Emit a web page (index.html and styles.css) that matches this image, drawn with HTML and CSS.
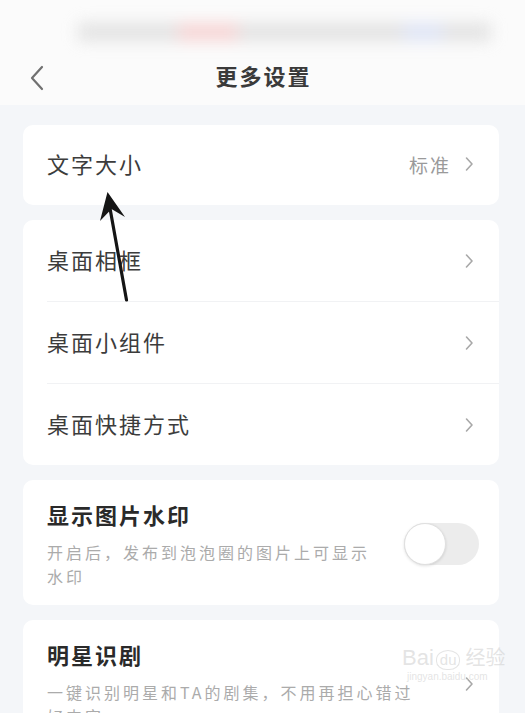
FILE: index.html
```html
<!DOCTYPE html>
<html lang="zh-CN">
<head>
<meta charset="utf-8">
<title>更多设置</title>
<link rel="stylesheet" href="styles.css">
</head>
<body>
<div class="page">
  <header class="topbar">
    <div class="status">
      <div class="blurbar">
        <span class="blob b-gray w90"></span>
        <span class="blob b-pink w60"></span>
        <span class="blob b-gray w160"></span>
        <span class="blob b-blue w35"></span>
        <span class="blob b-gray w45"></span>
      </div>
    </div>
    <nav class="nav">
      <span class="back">
        <svg width="16" height="26" viewBox="0 0 16 26"><path d="M13 2 L3 13 L13 24" fill="none" stroke="#707070" stroke-width="2.2" stroke-linecap="round" stroke-linejoin="round"/></svg>
      </span>
      <h1 class="title">更多设置</h1>
      <span></span>
    </nav>
  </header>

  <main class="content">
    <section class="card">
      <div class="row">
        <span class="label">文字大小</span>
        <span class="value">标准<svg class="chev" width="10" height="16" viewBox="0 0 10 16"><path d="M2.5 2 L8 8 L2.5 14" fill="none" stroke="#a8a8a8" stroke-width="1.6" stroke-linecap="round" stroke-linejoin="round"/></svg></span>
      </div>
    </section>

    <section class="card">
      <div class="row tall">
        <span class="label">桌面相框</span>
        <svg class="chev" width="10" height="16" viewBox="0 0 10 16"><path d="M2.5 2 L8 8 L2.5 14" fill="none" stroke="#a8a8a8" stroke-width="1.6" stroke-linecap="round" stroke-linejoin="round"/></svg>
      </div>
      <div class="divider"></div>
      <div class="row tall">
        <span class="label">桌面小组件</span>
        <svg class="chev" width="10" height="16" viewBox="0 0 10 16"><path d="M2.5 2 L8 8 L2.5 14" fill="none" stroke="#a8a8a8" stroke-width="1.6" stroke-linecap="round" stroke-linejoin="round"/></svg>
      </div>
      <div class="divider"></div>
      <div class="row tall">
        <span class="label">桌面快捷方式</span>
        <svg class="chev" width="10" height="16" viewBox="0 0 10 16"><path d="M2.5 2 L8 8 L2.5 14" fill="none" stroke="#a8a8a8" stroke-width="1.6" stroke-linecap="round" stroke-linejoin="round"/></svg>
      </div>
    </section>

    <section class="card detail">
      <div class="text">
        <div class="dtitle">显示图片水印</div>
        <p class="desc narrow">开启后，发布到泡泡圈的图片上可显示水印</p>
      </div>
      <span class="toggle"><span class="thumb"></span></span>
    </section>

    <section class="card detail link">
      <div class="text">
        <div class="dtitle">明星识剧</div>
        <p class="desc wide">一键识别明星和TA的剧集，不用再担心错过好内容</p>
      </div>
      <svg class="chev" width="10" height="16" viewBox="0 0 10 16"><path d="M2.5 2 L8 8 L2.5 14" fill="none" stroke="#a8a8a8" stroke-width="1.6" stroke-linecap="round" stroke-linejoin="round"/></svg>
    </section>
  </main>

  <svg class="arrow" width="525" height="713" viewBox="0 0 525 713">
    <path d="M126.5 300 L108.5 200" stroke="#151515" stroke-width="3.2" stroke-linecap="round" fill="none"/>
    <path d="M107.5 192 L125 217 L111.5 209 L100 221 Z" fill="#151515"/>
  </svg>

  <div class="watermark">
    <div class="wm-top"><span>Bai</span><span class="paw">du</span><span class="wm-cn">经验</span></div>
    <div class="wm-url">jingyan.baidu.com</div>
  </div>
</div>
</body>
</html>
```

FILE: styles.css
```css
* { box-sizing: border-box; }

html, body {
  margin: 0;
  padding: 0;
}

body {
  width: 525px;
  height: 713px;
  overflow: hidden;
  background: #f4f6f9;
  font-family: "Noto Sans CJK SC", "Noto Sans", sans-serif;
  color: #333;
}

.page {
  position: relative;
  width: 525px;
  height: 713px;
}

.topbar {
  background: #fbfbfb;
}

.status {
  height: 55px;
  padding: 23px 34px 0 78px;
}

.blurbar {
  display: flex;
  height: 18px;
  filter: blur(8px);
  opacity: 0.7;
}

.blob { display: block; height: 100%; }
.b-gray { background: #d8d8d8; }
.b-pink { background: #f4c4c4; }
.b-blue { background: #d2daf2; }
.w90 { width: 100px; }
.w60 { width: 60px; }
.w160 { width: 165px; }
.w35 { width: 40px; }
.w45 { width: 48px; }

.nav {
  height: 50px;
  display: grid;
  grid-template-columns: 70px 1fr 70px;
  align-items: center;
}

.back {
  display: flex;
  align-items: center;
  padding-left: 29px;
  padding-bottom: 4px;
}

.title {
  margin: 0;
  text-align: center;
  font-size: 22px;
  font-weight: 700;
  letter-spacing: 2px;
  color: #3a3a3a;
  padding-bottom: 10px;
  padding-left: 2px;
}

.content {
  padding: 20px 26px 0 23px;
  display: flex;
  flex-direction: column;
  gap: 15px;
}

.card {
  background: #ffffff;
  border-radius: 10px;
}

.row {
  height: 80px;
  display: flex;
  align-items: center;
  justify-content: space-between;
  padding: 0 25px 0 24px;
}

.row.tall { height: 81px; }

.label {
  font-size: 22px;
  letter-spacing: 2px;
  color: #3c3c3c;
  padding-bottom: 4px;
}

.value {
  display: flex;
  align-items: center;
  gap: 13px;
  font-size: 19px;
  letter-spacing: 2px;
  color: #9a9a9a;
  padding-bottom: 2px;
}

.chev { display: block; flex: none; }

.divider {
  height: 1px;
  margin-left: 24px;
  background: #f1f2f4;
}

.detail {
  display: flex;
  align-items: center;
  padding: 19px 20px 17px 24px;
}

.detail.link { padding-right: 25px; height: 125px; }

.text { flex: 1; }

.dtitle {
  font-size: 22px;
  line-height: 30px;
  letter-spacing: 2px;
  font-weight: 700;
  color: #2a2a2a;
}

.desc {
  margin: 11px 0 0;
  font-size: 16px;
  line-height: 24px;
  letter-spacing: 3px;
  color: #ababab;
}

.desc.narrow { max-width: 335px; }
.desc.wide { max-width: 378px; }

.toggle {
  flex: none;
  width: 75px;
  height: 42px;
  border-radius: 21px;
  background: #ececec;
  display: flex;
  align-items: center;
}

.thumb {
  width: 42px;
  height: 42px;
  border-radius: 50%;
  background: #fff;
  border: 1px solid #e0e0e0;
  box-shadow: 0 1px 3px rgba(0, 0, 0, 0.12);
}

.arrow {
  position: absolute;
  left: 0;
  top: 0;
  pointer-events: none;
}

.watermark {
  position: absolute;
  left: 402px;
  top: 646px;
  color: rgba(210, 210, 210, 0.6);
  font-family: "Liberation Sans", "Noto Sans CJK SC", sans-serif;
  pointer-events: none;
}

.wm-top {
  display: flex;
  align-items: flex-end;
  gap: 2px;
  font-size: 22px;
  line-height: 24px;
}

.paw {
  font-size: 15px;
  border: 1.5px solid rgba(210, 210, 210, 0.6);
  border-radius: 50% 50% 45% 45%;
  padding: 0 3px;
  line-height: 18px;
}

.wm-cn { font-size: 20px; margin-left: 3px; }

.wm-url {
  font-size: 10px;
  margin-top: 1px;
  padding-left: 5px;
}
```
